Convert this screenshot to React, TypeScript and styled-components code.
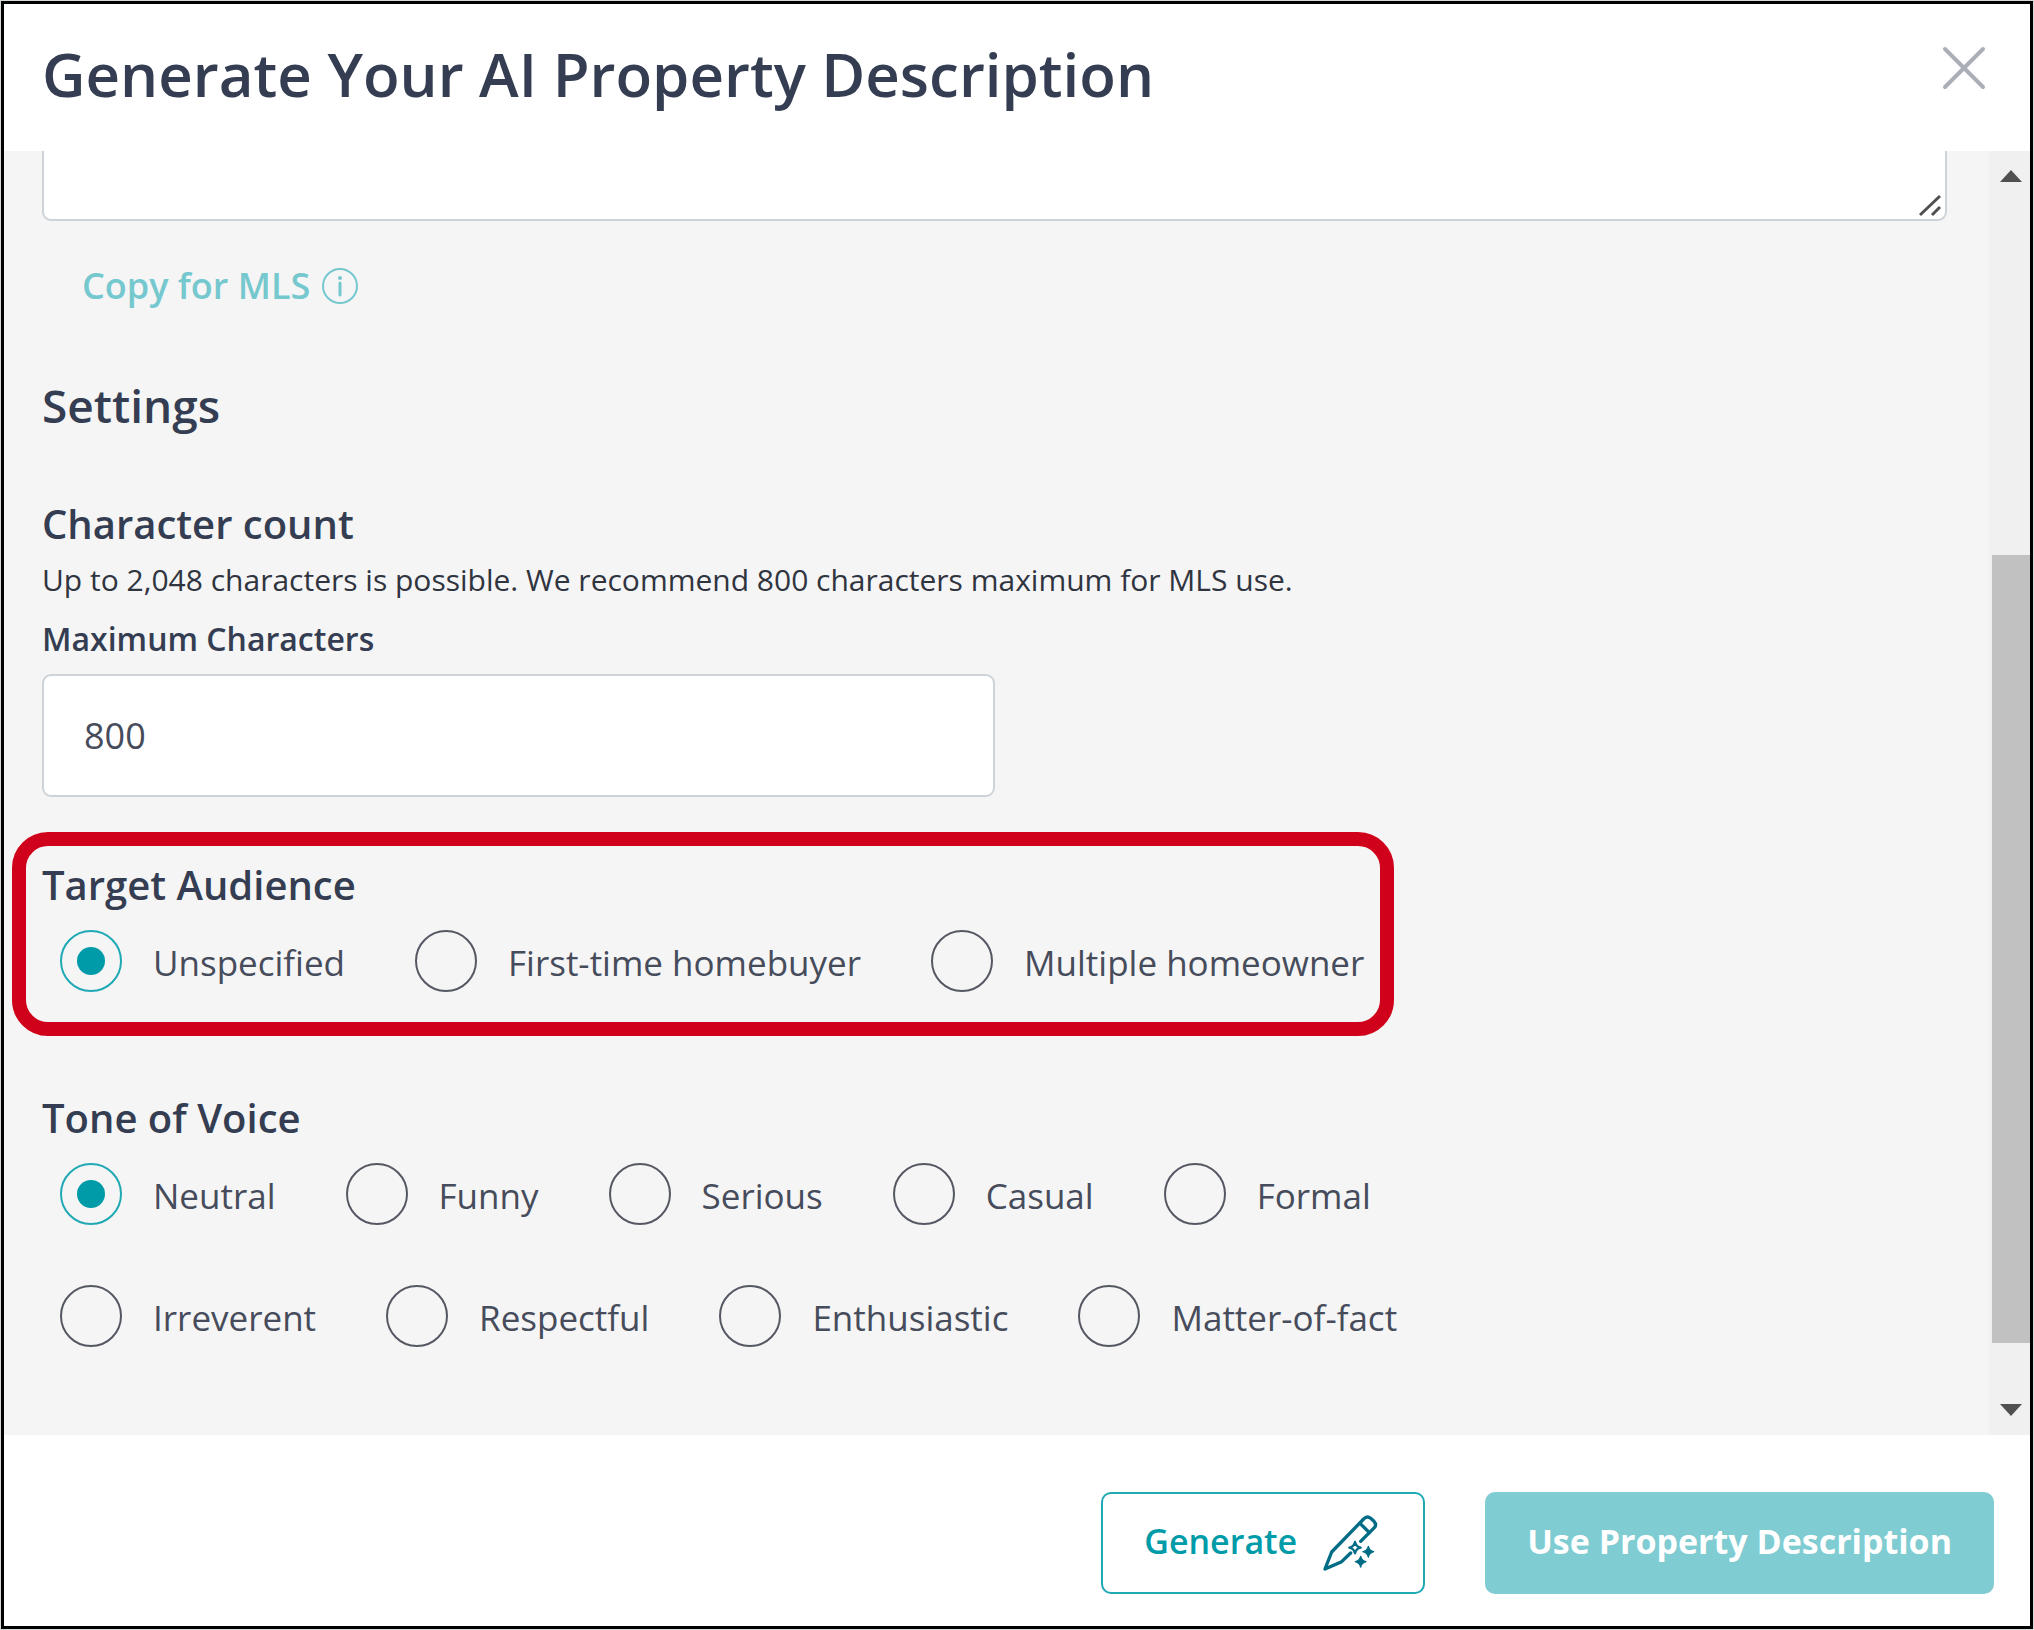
import React, { useState } from "react";
import styled, { createGlobalStyle, css } from "styled-components";

const color = {
  ink: "#343d51",
  text: "#464c5b",
  teal: "#009ba8",
  tealDeep: "#006c85",
  tealMuted: "#7fccd2",
  surface: "#f5f5f5",
  line: "#cdd3d8",
  highlight: "#d0021b",
};

const GlobalStyle = createGlobalStyle`
  *, *::before, *::after { box-sizing: border-box; }
  body {
    margin: 0;
    background: #d3dad7;
    color: ${color.ink};
    font-family: "Open Sans", "Noto Sans", sans-serif;
  }
  h1, h2, h3, p { margin: 0; }
  button, input, textarea { font-family: inherit; }
`;

const Page = styled.div`
  display: flex;
  min-height: 100vh;
  padding: 1px;
`;

const Dialog = styled.section`
  display: flex;
  flex: 1;
  flex-direction: column;
  min-width: 0;
  border: 3px solid #000;
  background: #fff;
`;

const Header = styled.header`
  display: flex;
  align-items: flex-start;
  justify-content: space-between;
  padding: 30px 44px 37px 38px;
`;

const Title = styled.h1`
  font-size: 60px;
  font-weight: 600;
  line-height: 80px;
`;

const CloseButton = styled.button`
  display: flex;
  margin-top: 12px;
  padding: 0;
  border: 0;
  background: none;
  cursor: pointer;
`;

const Body = styled.div`
  display: flex;
  flex: 1;
  background: ${color.surface};
`;

const Content = styled.div`
  display: flex;
  flex: 1;
  flex-direction: column;
  align-items: flex-start;
  min-width: 0;
  padding: 0 42px 60px 38px;
`;

const DescriptionField = styled.div`
  position: relative;
  display: flex;
  width: 100%;
`;

const DescriptionArea = styled.textarea`
  width: 100%;
  height: 70px;
  padding: 8px 40px;
  border: 2px solid ${color.line};
  border-top: 0;
  border-radius: 0 0 9px 9px;
  background: #fff;
  color: ${color.text};
  font-size: 36px;
  resize: none;
`;

const ResizeGrip = styled.svg`
  position: absolute;
  right: 5px;
  bottom: 4px;
  pointer-events: none;
`;

const CopyButton = styled.button`
  display: flex;
  align-items: center;
  gap: 12px;
  margin: 41px 0 0 40px;
  padding: 0;
  border: 0;
  background: none;
  color: #76c8cf;
  font-size: 36px;
  font-weight: 600;
  line-height: 48px;
  cursor: pointer;
`;

const SectionTitle = styled.h2`
  margin-top: 64px;
  font-size: 46px;
  font-weight: 600;
  line-height: 62px;
`;

const GroupTitle = styled.h3`
  font-size: 40px;
  font-weight: 600;
  line-height: 54px;
`;

const CharacterCount = styled.div`
  display: flex;
  flex-direction: column;
  width: 100%;
  margin-top: 61px;
`;

const Hint = styled.p`
  margin-top: 8px;
  color: #30343f;
  font-size: 30px;
  line-height: 42px;
`;

const FieldLabel = styled.label`
  margin-top: 16px;
  font-size: 32px;
  font-weight: 600;
  line-height: 44px;
`;

const TextInput = styled.input`
  width: 50%;
  height: 123px;
  margin-top: 13px;
  padding: 0 40px;
  border: 2px solid ${color.line};
  border-radius: 9px;
  background: #fff;
  color: ${color.text};
  font-size: 36px;
`;

const ChoiceGroup = styled.div<{ $highlighted?: boolean }>`
  margin-top: 55px;
  ${(p) =>
    p.$highlighted &&
    css`
      margin: 35px 0 0 -30px;
      padding: 12px 16px 30px;
      border: 14px solid ${color.highlight};
      border-radius: 36px;
    `}
`;

const Options = styled.div`
  display: flex;
  flex-wrap: wrap;
  gap: 60px 70px;
  max-width: 1400px;
  margin-top: 18px;
  padding-left: 18px;
`;

const Option = styled.label`
  display: flex;
  align-items: center;
  gap: 31px;
  color: ${color.text};
  font-size: 35px;
  line-height: 48px;
  cursor: pointer;
`;

const OptionText = styled.span`
  padding-top: 3px;
`;

const Radio = styled.input`
  display: grid;
  place-items: center;
  width: 62px;
  height: 62px;
  margin: 0;
  border: 2px solid #555863;
  border-radius: 50%;
  appearance: none;
  cursor: pointer;

  &:checked {
    border-color: #1fa9b4;
  }

  &:checked::before {
    width: 28px;
    height: 28px;
    border-radius: 50%;
    background: ${color.teal};
    content: "";
  }
`;

const Scrollbar = styled.div`
  display: flex;
  flex-direction: column;
  width: 41px;
  padding-left: 3px;
  background: #f0f0f0;
`;

const ScrollButton = styled.button`
  display: flex;
  align-items: center;
  justify-content: center;
  height: 50px;
  padding: 0;
  border: 0;
  background: none;
`;

const ScrollTrack = styled.div`
  display: grid;
  flex: 1;
  grid-template-rows: 354fr 788fr 42fr;
`;

const ScrollThumb = styled.div`
  grid-row: 2;
  background: #c1c1c1;
`;

const Footer = styled.footer`
  display: flex;
  justify-content: flex-end;
  gap: 60px;
  padding: 57px 36px 32px;
`;

const ActionButton = styled.button<{ $solid?: boolean }>`
  display: flex;
  align-items: center;
  gap: 25px;
  height: 102px;
  padding: 0 45px 0 41px;
  border: 2px solid #1fa9b4;
  border-radius: 10px;
  background: #fff;
  color: ${color.teal};
  font-size: 34px;
  font-weight: 600;
  line-height: 46px;
  cursor: pointer;
  ${(p) =>
    p.$solid &&
    css`
      padding: 0 40px;
      border-color: ${color.tealMuted};
      background: ${color.tealMuted};
      color: #fff;
      font-weight: 700;
    `}
`;

const ActionText = styled.span`
  padding-bottom: 4px;
`;

const CloseIcon = () => (
  <svg width="44" height="44" viewBox="0 0 44 44" fill="none" stroke="#abaeb7" strokeWidth="4" strokeLinecap="round" aria-hidden="true">
    <path d="M3 3 41 41M41 3 3 41" />
  </svg>
);

const InfoIcon = () => (
  <svg width="36" height="36" viewBox="0 0 36 36" fill="none" stroke="currentColor" aria-hidden="true">
    <circle cx="18" cy="18" r="17" strokeWidth="2" />
    <circle cx="18" cy="10" r="2" fill="currentColor" stroke="none" />
    <path d="M18 15v12" strokeWidth="3" strokeLinecap="round" />
  </svg>
);

const MagicPencilIcon = () => (
  <svg width="56" height="58" viewBox="0 0 168 174" fill="none" stroke={color.tealDeep} strokeWidth="10" strokeLinecap="round" strokeLinejoin="round" aria-hidden="true">
    <path d="M86 117 59 143 9 165 29 114 125 15Q135 4 146 13L156 22Q165 32 157 41L116 82" />
    <path d="M114 28 142 56" />
    <path d="M99 84Q102 98 116 101Q102 104 99 118Q96 104 82 101Q96 98 99 84Z" strokeWidth="7" />
    <g fill={color.tealDeep} strokeWidth="4">
      <path d="M139 97Q142 110 155 113Q142 116 139 129Q136 116 123 113Q136 110 139 97Z" />
      <path d="M116 127Q119 140 132 143Q119 146 116 159Q113 146 100 143Q113 140 116 127Z" />
    </g>
  </svg>
);

const Arrow = ({ down }: { down?: boolean }) => (
  <svg width="22" height="12" viewBox="0 0 22 12" fill="#505050" aria-hidden="true">
    <path d={down ? "M0 0h22L11 12z" : "M0 12h22L11 0z"} />
  </svg>
);

interface ChoiceProps {
  name: string;
  title: string;
  options: string[];
  highlighted?: boolean;
}

const Choice = ({ name, title, options, highlighted }: ChoiceProps) => {
  const [selected, setSelected] = useState(options[0]);
  return (
    <ChoiceGroup role="radiogroup" aria-labelledby={`${name}-title`} $highlighted={highlighted}>
      <GroupTitle id={`${name}-title`}>{title}</GroupTitle>
      <Options>
        {options.map((option) => (
          <Option key={option}>
            <Radio type="radio" name={name} value={option} checked={selected === option} onChange={() => setSelected(option)} />
            <OptionText>{option}</OptionText>
          </Option>
        ))}
      </Options>
    </ChoiceGroup>
  );
};

const audiences = ["Unspecified", "First-time homebuyer", "Multiple homeowner"];
const tones = ["Neutral", "Funny", "Serious", "Casual", "Formal", "Irreverent", "Respectful", "Enthusiastic", "Matter-of-fact"];

export default function App() {
  const [limit, setLimit] = useState("800");
  return (
    <>
      <GlobalStyle />
      <Page>
        <Dialog role="dialog" aria-labelledby="dialog-title">
          <Header>
            <Title id="dialog-title">Generate Your AI Property Description</Title>
            <CloseButton type="button" aria-label="Close">
              <CloseIcon />
            </CloseButton>
          </Header>
          <Body>
            <Content>
              <DescriptionField>
                <DescriptionArea aria-label="Property description" />
                <ResizeGrip width="23" height="23" viewBox="0 0 23 23" fill="none" stroke="#505050" strokeWidth="3" aria-hidden="true">
                  <path d="M1 21 21 2M13 21 21 13" />
                </ResizeGrip>
              </DescriptionField>
              <CopyButton type="button">
                Copy for MLS
                <InfoIcon />
              </CopyButton>
              <SectionTitle>Settings</SectionTitle>
              <CharacterCount>
                <GroupTitle>Character count</GroupTitle>
                <Hint>Up to 2,048 characters is possible. We recommend 800 characters maximum for MLS use.</Hint>
                <FieldLabel htmlFor="max-characters">Maximum Characters</FieldLabel>
                <TextInput id="max-characters" type="text" inputMode="numeric" value={limit} onChange={(e) => setLimit(e.target.value)} />
              </CharacterCount>
              <Choice name="audience" title="Target Audience" options={audiences} highlighted />
              <Choice name="tone" title="Tone of Voice" options={tones} />
            </Content>
            <Scrollbar>
              <ScrollButton type="button" aria-label="Scroll up">
                <Arrow />
              </ScrollButton>
              <ScrollTrack>
                <ScrollThumb />
              </ScrollTrack>
              <ScrollButton type="button" aria-label="Scroll down">
                <Arrow down />
              </ScrollButton>
            </Scrollbar>
          </Body>
          <Footer>
            <ActionButton type="button">
              <ActionText>Generate</ActionText>
              <MagicPencilIcon />
            </ActionButton>
            <ActionButton type="button" $solid>
              <ActionText>Use Property Description</ActionText>
            </ActionButton>
          </Footer>
        </Dialog>
      </Page>
    </>
  );
}
